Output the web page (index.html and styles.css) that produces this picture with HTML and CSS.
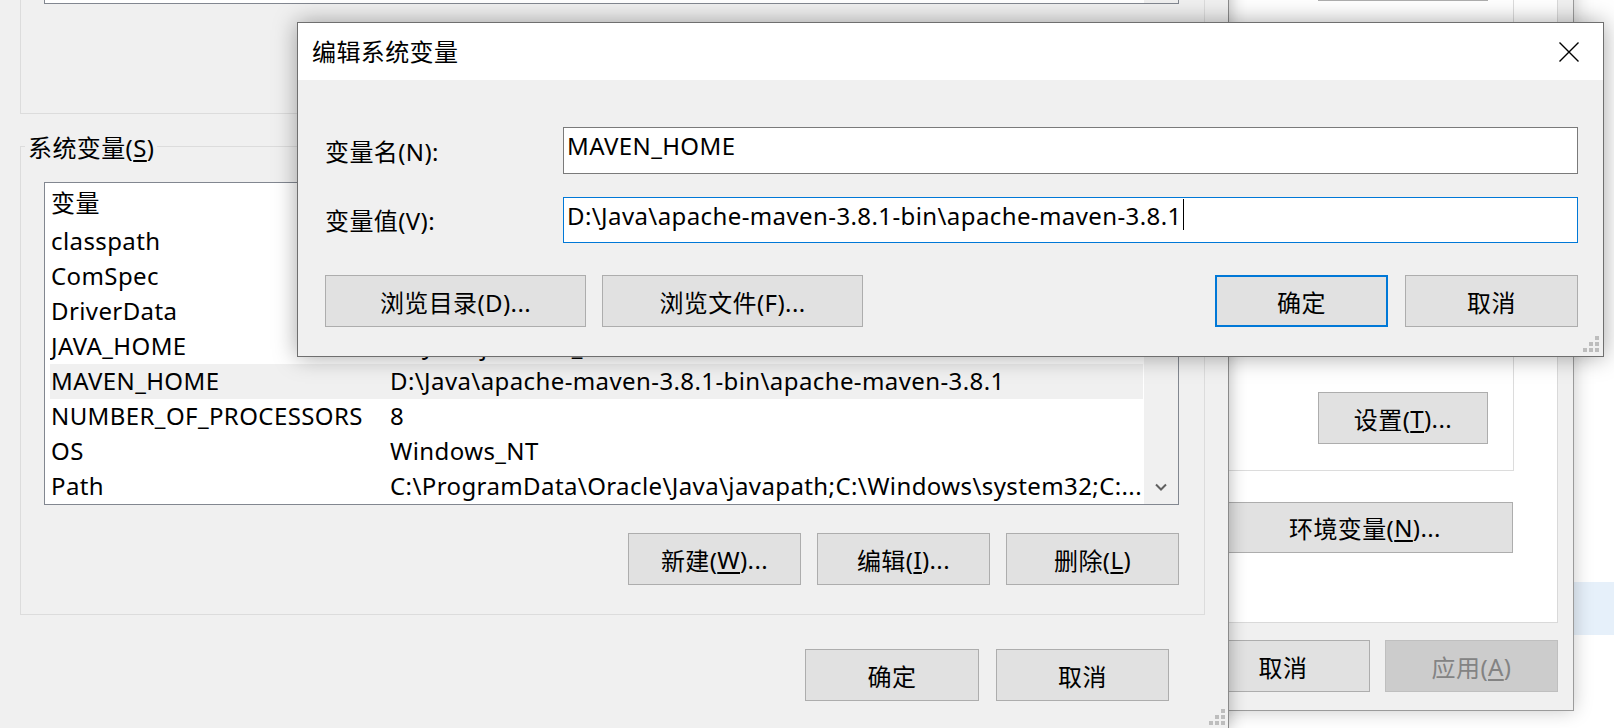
FILE: index.html
```html
<!DOCTYPE html>
<html lang="zh-CN">
<head>
<meta charset="utf-8">
<title>编辑系统变量</title>
<link rel="stylesheet" href="styles.css">
</head>
<body>
<div class="desktop">
  <div class="bg-highlight"></div>

  <!-- System properties window (back) -->
  <div class="win sysprops">
    <div class="tab-panel">
      <div class="pgroup group-a">
        <div class="btn w170"></div>
      </div>
      <div class="pgroup group-b">
        <div class="btn w170">设置(<u>T</u>)...</div>
      </div>
      <div class="btn env-btn">环境变量(<u>N</u>)...</div>
    </div>
    <div class="btn-row sys-btns">
      <div class="btn w174">取消</div>
      <div class="btn w173 disabled">应用(<u>A</u>)</div>
    </div>
  </div>

  <!-- Environment variables dialog (middle) -->
  <div class="win envvars">
    <div class="group group-user">
      <div class="listbox lb-user">
        <div class="rows"></div>
        <div class="scroll"></div>
      </div>
      <div class="btn-row group-btns">
        <div class="btn w173"></div>
        <div class="btn w173"></div>
        <div class="btn w173"></div>
      </div>
    </div>

    <div class="group group-sys">
      <span class="legend">系统变量(<u>S</u>)</span>
      <div class="listbox lb-sys">
        <div class="rows">
          <div class="row head"><span class="c1">变量</span><span class="c2"></span></div>
          <div class="row"><span class="c1">classpath</span><span class="c2"></span></div>
          <div class="row"><span class="c1">ComSpec</span><span class="c2"></span></div>
          <div class="row"><span class="c1">DriverData</span><span class="c2"></span></div>
          <div class="row"><span class="c1">JAVA_HOME</span><span class="c2">D:\Java\jdk1.8.0_291</span></div>
          <div class="row sel"><span class="c1">MAVEN_HOME</span><span class="c2">D:\Java\apache-maven-3.8.1-bin\apache-maven-3.8.1</span></div>
          <div class="row"><span class="c1">NUMBER_OF_PROCESSORS</span><span class="c2">8</span></div>
          <div class="row"><span class="c1">OS</span><span class="c2">Windows_NT</span></div>
          <div class="row"><span class="c1">Path</span><span class="c2">C:\ProgramData\Oracle\Java\javapath;C:\Windows\system32;C:...</span></div>
        </div>
        <div class="scroll">
          <div class="thumb"></div>
          <svg class="chev" width="34" height="34" viewBox="0 0 34 34"><polyline points="12,14.5 17,19.5 22,14.5" fill="none" stroke="#606060" stroke-width="2"/></svg>
        </div>
      </div>
      <div class="btn-row group-btns">
        <div class="btn w173">新建(<u>W</u>)...</div>
        <div class="btn w173">编辑(<u>I</u>)...</div>
        <div class="btn w173">删除(<u>L</u>)</div>
      </div>
    </div>

    <div class="btn-row env-bottom">
      <div class="btn w174">确定</div>
      <div class="btn w173">取消</div>
    </div>

    <svg class="grip" width="16" height="16" viewBox="0 0 16 16"><rect x="12" y="0" width="4" height="4"/><rect x="6" y="6" width="4" height="4"/><rect x="12" y="6" width="4" height="4"/><rect x="0" y="12" width="4" height="4"/><rect x="6" y="12" width="4" height="4"/><rect x="12" y="12" width="4" height="4"/></svg>
  </div>

  <!-- Edit system variable dialog (front) -->
  <div class="win editdlg">
    <div class="titlebar">
      <span class="title">编辑系统变量</span>
      <div class="close">
        <svg width="20" height="20" viewBox="0 0 20 20"><path d="M0.5 0.5 L19.5 19.5 M19.5 0.5 L0.5 19.5" stroke="#000" stroke-width="1.4" fill="none"/></svg>
      </div>
    </div>
    <div class="dlg-body">
      <div class="field field-1">
        <span class="flabel">变量名(N):</span>
        <div class="tbox">MAVEN_HOME</div>
      </div>
      <div class="field field-2">
        <span class="flabel">变量值(V):</span>
        <div class="tbox focus">D:\Java\apache-maven-3.8.1-bin\apache-maven-3.8.1<span class="caret"></span></div>
      </div>
      <div class="dlg-btns">
        <div class="btn w261">浏览目录(D)...</div>
        <div class="btn w261">浏览文件(F)...</div>
        <div class="spacer"></div>
        <div class="btn w173 default">确定</div>
        <div class="btn w173">取消</div>
      </div>
    </div>
    <svg class="grip grip-edit" width="16" height="16" viewBox="0 0 16 16"><rect x="12" y="0" width="4" height="4"/><rect x="6" y="6" width="4" height="4"/><rect x="12" y="6" width="4" height="4"/><rect x="0" y="12" width="4" height="4"/><rect x="6" y="12" width="4" height="4"/><rect x="12" y="12" width="4" height="4"/></svg>
  </div>
</div>
</body>
</html>
```

FILE: styles.css
```css
* { box-sizing: border-box; }
html, body { margin: 0; padding: 0; }
body {
  width: 1614px;
  height: 728px;
  overflow: hidden;
  background: #ffffff;
  font-family: "Noto Sans", "Noto Sans CJK SC", sans-serif;
  font-size: 24px;
  letter-spacing: 0.4px;
  color: #000;
}
u { text-decoration-thickness: 1.5px; text-underline-offset: 3px; }

.desktop {
  position: relative;
  width: 1614px;
  height: 728px;
  overflow: hidden;
  background: #ffffff;
}
.bg-highlight {
  position: absolute;
  left: 1400px;
  top: 582px;
  width: 214px;
  height: 53px;
  background: #e6f0fa;
}

.win { position: absolute; background: #f0f0f0; }

/* buttons */
.btn {
  height: 52px;
  background: #e1e1e1;
  border: 1px solid #adadad;
  display: flex;
  align-items: center;
  justify-content: center;
  white-space: nowrap;
  flex: none;
}
.btn.default { border: 2px solid #0078d7; }
.btn.disabled { background: #cccccc; border-color: #bfbfbf; color: #838383; }
.w170 { width: 170px; }
.w173 { width: 173px; }
.w174 { width: 174px; }
.w261 { width: 261px; }
.btn-row { display: flex; justify-content: flex-end; }

/* ---------- system properties window ---------- */
.sysprops {
  left: 880px;
  top: -120px;
  width: 694px;
  border: 1px solid #9b9b9b;
  padding: 10px 15px 18px 15px;
  box-shadow: 0 0 18px rgba(0, 0, 0, 0.22);
  display: flex;
  flex-direction: column;
}
.tab-panel {
  background: #ffffff;
  border: 1px solid #d9d9d9;
  padding: 8px 43px 69px 0;
  display: flex;
  flex-direction: column;
  align-items: flex-end;
}
.pgroup {
  width: 600px;
  border: 1px solid #dcdcdc;
  display: flex;
  justify-content: flex-end;
  align-items: flex-end;
  padding-right: 25px;
}
.group-a { height: 131px; padding-bottom: 29px; }
.group-b { height: 411px; margin-top: 29px; padding-bottom: 26px; }
.env-btn { width: 296px; height: 51px; margin-top: 31px; margin-right: 1px; }
.sys-btns { margin-top: 17px; gap: 15px; }

/* ---------- environment variables dialog ---------- */
.envvars {
  left: -10px;
  top: -340px;
  width: 1239px;
  height: 1070px;
  border: 1px solid #8a8a8a;
  padding: 7px 23px 0 29px;
  box-shadow: 0 0 16px rgba(0, 0, 0, 0.3);
}
.group {
  position: relative;
  border: 1px solid #dcdcdc;
  padding: 35px 25px 29px 23px;
}
.group-sys { margin-top: 32px; }
.legend {
  position: absolute;
  left: 4px;
  top: -17px;
  padding: 0 3px;
  line-height: 36px;
  background: #f0f0f0;
  white-space: nowrap;
}
.listbox {
  background: #ffffff;
  border: 1px solid #828790;
  display: flex;
  overflow: hidden;
}
.lb-user { height: 300px; }
.lb-sys { height: 323px; }
.rows { flex: 1; padding: 0 1px 0 5px; min-width: 0; }
.row {
  display: flex;
  height: 35px;
  line-height: 34px;
  white-space: nowrap;
  overflow: hidden;
}
.row.head { height: 41px; line-height: 40px; }
.row.sel { background: #f0f0f0; }
.c1 { width: 339px; flex: none; padding-left: 1px; }
.c2 { padding-left: 1px; }
.scroll {
  width: 34px;
  flex: none;
  background: #f0f0f0;
  display: flex;
  flex-direction: column;
  justify-content: space-between;
  align-items: center;
}
.thumb { width: 12px; height: 110px; margin-top: 40px; background: #c2c2c2; border-radius: 6px; }
.chev { display: block; }
.group-btns { margin-top: 28px; gap: 16px; }
.env-bottom { margin-top: 34px; gap: 17px; padding-right: 36px; }

.grip { position: absolute; right: 3px; bottom: 4px; fill: #bdbdbd; }

/* ---------- edit dialog ---------- */
.editdlg {
  left: 297px;
  top: 22px;
  width: 1307px;
  border: 1px solid #6f6f6f;
  box-shadow: 0 0 22px rgba(0, 0, 0, 0.35);
  display: flex;
  flex-direction: column;
}
.titlebar {
  height: 57px;
  background: #ffffff;
  display: flex;
  align-items: center;
  justify-content: space-between;
}
.title { padding-left: 14px; line-height: 57px; }
.close {
  width: 68px;
  height: 57px;
  display: flex;
  align-items: center;
  justify-content: center;
}
.close svg { display: block; }
.dlg-body {
  padding: 47px 25px 29px 27px;
  display: flex;
  flex-direction: column;
}
.field { display: flex; align-items: center; }
.field-1 { height: 47px; }
.field-2 { height: 46px; margin-top: 23px; }
.flabel { width: 238px; flex: none; padding-bottom: 1px; white-space: nowrap; }
.tbox {
  flex: 1;
  height: 100%;
  background: #ffffff;
  border: 1px solid #7a7a7a;
  padding: 0 4px 0 3px;
  line-height: 36px;
  white-space: nowrap;
}
.tbox.focus { border-color: #0078d7; }
.caret {
  display: inline-block;
  width: 1px;
  height: 31px;
  margin-left: 1px;
  background: #000;
  vertical-align: -5px;
}
.dlg-btns { display: flex; margin-top: 32px; gap: 16px; }
.dlg-btns .spacer { flex: 1; }
.dlg-btns .default { margin-right: 1px; }
.grip-edit { right: 4px; bottom: 4px; }
```
